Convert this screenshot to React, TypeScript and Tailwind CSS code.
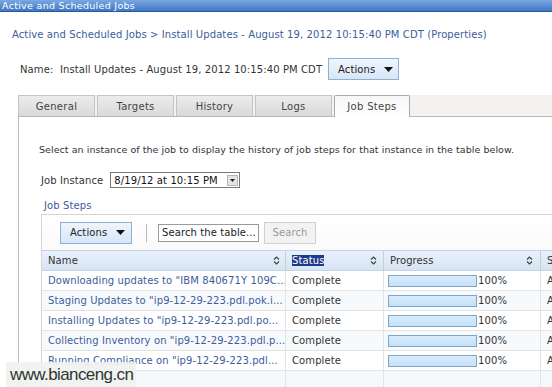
import React from "react";

const rows = [
  'Downloading updates to "IBM 840671Y 109C...',
  'Staging Updates to "ip9-12-29-223.pdl.pok.i...',
  'Installing Updates to "ip9-12-29-223.pdl.po...',
  'Collecting Inventory on "ip9-12-29-223.pdl.p...',
  'Running Compliance on "ip9-12-29-223.pdl...',
];

const tabs = ["General", "Targets", "History", "Logs"];

const SortIcon = () => (
  <svg width="7" height="9" viewBox="0 0 7 9" className="shrink-0">
    <path d="M1 3.5 L3.5 1 L6 3.5" fill="none" stroke="#444" strokeWidth="1.2" />
    <path d="M1 5.5 L3.5 8 L6 5.5" fill="none" stroke="#444" strokeWidth="1.2" />
  </svg>
);

const Caret = () => (
  <svg width="9" height="5" viewBox="0 0 9 5" className="shrink-0">
    <path d="M0 0 L9 0 L4.5 5 Z" fill="#111" />
  </svg>
);

const App = () => {
  return (
    <div className="relative w-[552px] h-[387px] overflow-hidden bg-white text-[10px] tracking-[0.1px] text-[#333] font-['DejaVu_Sans',Verdana,sans-serif]">
      {/* title bar */}
      <div className="h-[12px] bg-gradient-to-b from-[#7aa7e0] to-[#3f78c6] border-b border-[#2b5896] text-white text-[9.5px] tracking-[0.3px] leading-[11px] pl-[2px]">
        Active and Scheduled Jobs
      </div>

      {/* breadcrumb */}
      <div className="pl-[12px] pt-[17px] text-[#3c5d9c] leading-[12px] whitespace-nowrap">
        Active and Scheduled Jobs &gt; Install Updates - August 19, 2012 10:15:40 PM CDT (Properties)
      </div>

      {/* name row */}
      <div className="flex items-center pl-[20px] mt-[17px] h-[22px] whitespace-nowrap">
        <span>Name:&nbsp; Install Updates - August 19, 2012 10:15:40 PM CDT</span>
        <button className="ml-[6px] w-[71px] h-[22px] flex items-center justify-between pl-[9px] pr-[5px] bg-gradient-to-b from-[#eef5fd] to-[#d7e6f7] border border-[#8eb0d6] text-[#222]">
          <span>Actions</span>
          <Caret />
        </button>
      </div>

      {/* tabs */}
      <div className="mt-[15px] ml-[18px] flex items-end h-[22px] bg-[#f3f2ef] border-b border-[#b9b9b9]">
        {tabs.map((t) => (
          <div
            key={t}
            className="mr-[2px] w-[77px] h-[21px] flex items-center justify-center bg-gradient-to-b from-[#ececec] to-[#d9d9d9] border border-b-0 border-[#c4c4c4] text-[#444] tracking-[0.3px]"
          >
            {t}
          </div>
        ))}
        <div className="w-[76px] h-[22px] -mb-px flex items-center justify-center bg-gradient-to-b from-[#f6f6f6] to-white border border-b-0 border-[#aaaaaa] rounded-t-[2px] text-[#444] tracking-[0.3px]">
          Job Steps
        </div>
      </div>

      {/* panel */}
      <div className="ml-[18px] border-l border-[#bdbdbd] h-[280px] pt-[27px] pl-[20px]">
        <div className="leading-[12px] whitespace-nowrap text-[9.5px] tracking-[0.05px]">
          Select an instance of the job to display the history of job steps for that instance in the table below.
        </div>

        <div className="flex items-center mt-[16px] pl-[2px] h-[16px]">
          <span>Job Instance</span>
          <div className="ml-[7px] w-[130px] h-[16px] border border-[#7a7a7a] flex items-center justify-between pl-[3px] pr-[1px] bg-white">
            <span className="text-[#111] whitespace-nowrap">8/19/12 at 10:15 PM</span>
            <div className="w-[11px] h-[11px] bg-[#e4e4e4] border border-[#b5b5b5] flex items-center justify-center">
              <svg width="5" height="3" viewBox="0 0 5 3">
                <path d="M0 0 L5 0 L2.5 3 Z" fill="#222" />
              </svg>
            </div>
          </div>
        </div>

        <div className="mt-[12px] pl-[5px] text-[#3c5d9c] leading-[11px]">Job Steps</div>

        {/* table container */}
        <div className="mt-[3px] ml-[2px] border-t border-l border-[#d4d4d4] w-[520px]">
          <div className="flex items-center h-[35px] pl-[18px] bg-gradient-to-b from-white to-[#fafafa]">
            <button className="w-[72px] h-[22px] flex items-center justify-between pl-[9px] pr-[6px] bg-gradient-to-b from-[#eef5fd] to-[#d7e6f7] border border-[#8eb0d6] text-[#222]">
              <span>Actions</span>
              <Caret />
            </button>
            <div className="ml-[14px] w-px h-[18px] bg-[#b8b8b8]" />
            <div className="ml-[11px] w-[101px] h-[18px] border border-[#9a9a9a] bg-white flex items-center pl-[3px] text-[#222] whitespace-nowrap overflow-hidden">
              Search the table...
            </div>
            <div className="ml-[5px] w-[52px] h-[22px] border border-[#d0d0d0] bg-[#f2f2f2] flex items-center justify-center text-[#999]">
              Search
            </div>
          </div>

          {/* header */}
          <div className="flex h-[21px] bg-gradient-to-b from-[#e9f1fa] to-[#d6e4f3] border-t border-b border-[#c5d3e2]">
            <div className="w-[244px] flex items-center justify-between pl-[6px] pr-[5px] border-r border-[#c0cfde]">
              <span>Name</span>
              <SortIcon />
            </div>
            <div className="w-[98px] flex items-center justify-between pl-[6px] pr-[6px] border-r border-[#c0cfde]">
              <span className="bg-[#1f3a8a] text-white leading-[11px]">Status</span>
              <SortIcon />
            </div>
            <div className="w-[157px] flex items-center justify-between pl-[6px] pr-[7px] border-r border-[#c0cfde]">
              <span>Progress</span>
              <SortIcon />
            </div>
            <div className="flex-1 flex items-center pl-[6px]">S</div>
          </div>

          {/* rows */}
          {rows.map((r, i) => (
            <div
              key={r}
              className={`flex h-[20px] border-b border-[#e3e3e3] ${i % 2 === 1 ? "bg-[#f7fafd]" : "bg-white"}`}
            >
              <div className="w-[244px] flex items-center pl-[6px] text-[#3c5d9c] border-r border-[#e3e3e3] whitespace-nowrap overflow-hidden">
                {r}
              </div>
              <div className="w-[98px] flex items-center pl-[6px] border-r border-[#e3e3e3]">Complete</div>
              <div className="w-[157px] flex items-center pl-[4px] border-r border-[#e3e3e3]">
                <div className="w-[89px] h-[12px] bg-gradient-to-b from-[#d9ecfb] to-[#c4e0f7] border border-[#7fa6c9]" />
                <span className="ml-[1px]">100%</span>
              </div>
              <div className="flex-1 flex items-center pl-[6px]">A</div>
            </div>
          ))}

          {/* empty body */}
          <div className="flex h-[40px] bg-[#f6f9fc]">
            <div className="w-[244px] border-r border-[#e3e3e3]" />
            <div className="w-[98px] border-r border-[#e3e3e3]" />
            <div className="w-[157px] border-r border-[#e3e3e3]" />
          </div>
        </div>
      </div>

      {/* watermark */}
      <div className="absolute left-[6px] top-[362px] w-[130px] h-[25px] bg-[#eef3ee]/90 flex items-center pl-[4px] text-[#333] text-[17px] tracking-[-0.6px] font-['Liberation_Sans',Arial,sans-serif]">
        www.bianceng.cn
      </div>
    </div>
  );
};

export default App;
